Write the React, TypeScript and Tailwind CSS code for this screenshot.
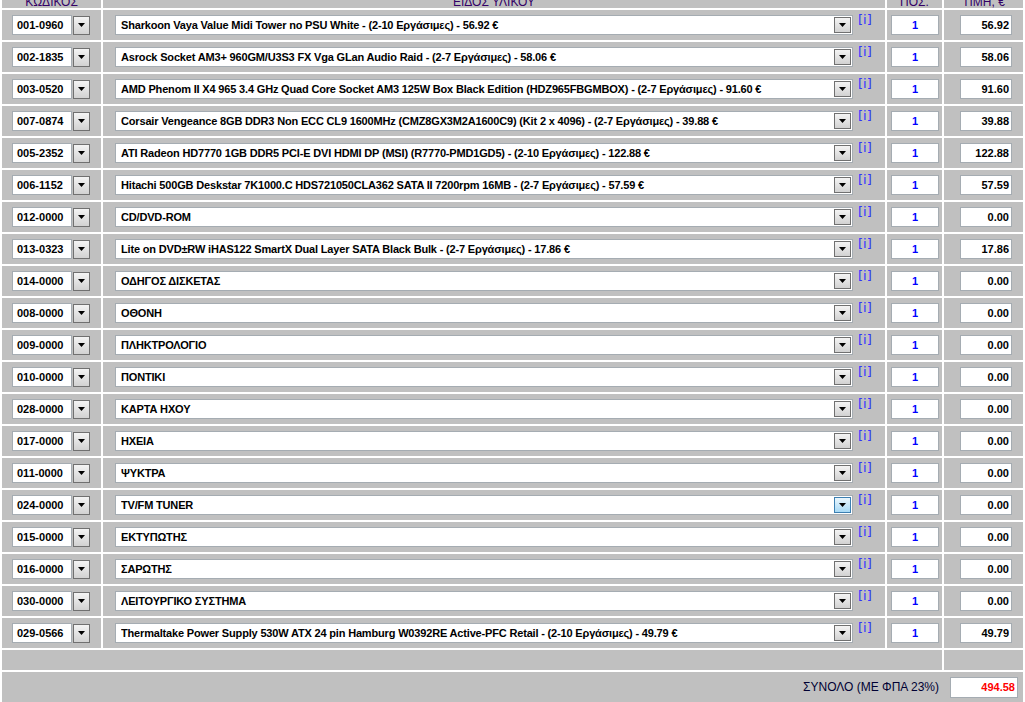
import React from "react";

type Row = { code: string; name: string; price: string; hover?: boolean };

const rows: Row[] = [
  { code: "001-0960", name: "Sharkoon Vaya Value Midi Tower no PSU White - (2-10 Εργάσιμες) - 56.92 €", price: "56.92" },
  { code: "002-1835", name: "Asrock Socket AM3+ 960GM/U3S3 FX Vga GLan Audio Raid - (2-7 Εργάσιμες) - 58.06 €", price: "58.06" },
  { code: "003-0520", name: "AMD Phenom II X4 965 3.4 GHz Quad Core Socket AM3 125W Box Black Edition (HDZ965FBGMBOX) - (2-7 Εργάσιμες) - 91.60 €", price: "91.60" },
  { code: "007-0874", name: "Corsair Vengeance 8GB DDR3 Non ECC CL9 1600MHz (CMZ8GX3M2A1600C9) (Kit 2 x 4096) - (2-7 Εργάσιμες) - 39.88 €", price: "39.88" },
  { code: "005-2352", name: "ATI Radeon HD7770 1GB DDR5 PCI-E DVI HDMI DP (MSI) (R7770-PMD1GD5) - (2-10 Εργάσιμες) - 122.88 €", price: "122.88" },
  { code: "006-1152", name: "Hitachi 500GB Deskstar 7K1000.C HDS721050CLA362 SATA II 7200rpm 16MB - (2-7 Εργάσιμες) - 57.59 €", price: "57.59" },
  { code: "012-0000", name: "CD/DVD-ROM", price: "0.00" },
  { code: "013-0323", name: "Lite on DVD±RW iHAS122 SmartX Dual Layer SATA Black Bulk - (2-7 Εργάσιμες) - 17.86 €", price: "17.86" },
  { code: "014-0000", name: "ΟΔΗΓΟΣ ΔΙΣΚΕΤΑΣ", price: "0.00" },
  { code: "008-0000", name: "ΟΘΟΝΗ", price: "0.00" },
  { code: "009-0000", name: "ΠΛΗΚΤΡΟΛΟΓΙΟ", price: "0.00" },
  { code: "010-0000", name: "ΠΟΝΤΙΚΙ", price: "0.00" },
  { code: "028-0000", name: "ΚΑΡΤΑ ΗΧΟΥ", price: "0.00" },
  { code: "017-0000", name: "ΗΧΕΙΑ", price: "0.00" },
  { code: "011-0000", name: "ΨΥΚΤΡΑ", price: "0.00" },
  { code: "024-0000", name: "TV/FM TUNER", price: "0.00", hover: true },
  { code: "015-0000", name: "ΕΚΤΥΠΩΤΗΣ", price: "0.00" },
  { code: "016-0000", name: "ΣΑΡΩΤΗΣ", price: "0.00" },
  { code: "030-0000", name: "ΛΕΙΤΟΥΡΓΙΚΟ ΣΥΣΤΗΜΑ", price: "0.00" },
  { code: "029-0566", name: "Thermaltake Power Supply 530W ATX 24 pin Hamburg W0392RE Active-PFC Retail - (2-10 Εργάσιμες) - 49.79 €", price: "49.79" },
];

function Arrow({ hover }: { hover?: boolean }) {
  return (
    <div
      className={
        hover
          ? "flex h-full w-[17px] items-center justify-center border border-[#3c7fb1] bg-gradient-to-b from-[#eaf6fd] to-[#a7d9f5]"
          : "flex h-full w-[17px] items-center justify-center border border-[#707070] bg-gradient-to-b from-[#f4f4f4] to-[#d2d2d2]"
      }
    >
      <svg width="7" height="4" viewBox="0 0 7 4">
        <path d="M0 0h7L3.5 4z" fill="#000" />
      </svg>
    </div>
  );
}

const cell = "bg-[#c0c0c0] h-[30px] flex items-center";

export default function App() {
  return (
    <div className="h-[702px] w-[1025px] overflow-hidden bg-white font-['Liberation_Sans',Arial,sans-serif] text-black">
      <div className="-mt-[16px] grid grid-cols-[99px_782px_55px_79px] gap-[2px] px-[2px]">
        {/* header */}
        {["ΚΩΔΙΚΟΣ", "ΕΙΔΟΣ ΥΛΙΚΟΥ", "ΠΟΣ.", "ΤΙΜΗ, €"].map((h) => (
          <div key={h} className="flex h-[24px] items-end justify-center bg-[#c0c0c0] text-[12px] leading-[12px] text-[#330066]">
            {h}
          </div>
        ))}

        {rows.map((r) => (
          <React.Fragment key={r.code}>
            <div className={`${cell} pl-[10px]`}>
              <div className="flex h-[20px] w-[60px] items-center border border-[#a5acb2] bg-white pl-[4px] text-[11px] font-bold">
                {r.code}
              </div>
              <div className="ml-[1px] h-[19px]">
                <Arrow />
              </div>
            </div>
            <div className={`${cell} pl-[12px]`}>
              <div className="flex h-[20px] w-[738px] items-center border border-[#a5acb2] bg-white pl-[5px] pr-[1px]">
                <span className="flex-1 truncate text-[11px] font-bold tracking-[-0.17px]">{r.name}</span>
                <div className="h-[16px]">
                  <Arrow hover={r.hover} />
                </div>
              </div>
              <span className="ml-[5px] mt-[2px] self-start font-['DejaVu_Sans',Verdana,sans-serif] text-[13px] leading-[16px] text-[#3333ff]">
                [i]
              </span>
            </div>
            <div className={`${cell} pl-[4px]`}>
              <div className="flex h-[20px] w-[48px] items-center justify-center border border-[#a5acb2] bg-white text-[11px] font-bold text-[#0000ff]">
                1
              </div>
            </div>
            <div className={`${cell} pl-[16px]`}>
              <div className="flex h-[20px] w-[52px] items-center justify-end border border-[#a5acb2] bg-white pr-[2px] text-[11px] font-bold">
                {r.price}
              </div>
            </div>
          </React.Fragment>
        ))}

        <div className="col-span-3 h-[20px] bg-[#c0c0c0]" />
        <div className="h-[20px] bg-[#c0c0c0]" />

        <div className="col-span-4 flex h-[30px] items-center justify-end bg-[#c0c0c0] pr-[5px]">
          <span className="text-[12px] text-[#000033]">ΣΥΝΟΛΟ (ΜΕ ΦΠΑ 23%)</span>
          <div className="ml-[11px] flex h-[21px] w-[68px] items-center justify-end border border-[#a5acb2] bg-white pr-[2px] text-[11px] font-bold text-[#ff0000]">
            494.58
          </div>
        </div>
      </div>
    </div>
  );
}
